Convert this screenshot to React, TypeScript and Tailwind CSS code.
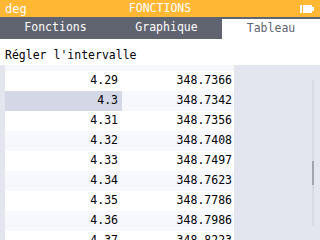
const rows = [
  { x: "4.29", y: "348.7366" },
  { x: "4.3", y: "348.7342", selected: true },
  { x: "4.31", y: "348.7356" },
  { x: "4.32", y: "348.7408" },
  { x: "4.33", y: "348.7497" },
  { x: "4.34", y: "348.7623" },
  { x: "4.35", y: "348.7786" },
  { x: "4.36", y: "348.7986" },
  { x: "4.37", y: "348.8223" },
];

function Battery() {
  return (
    <svg width="14" height="8" viewBox="0 0 14 8">
      <rect x="0" y="0" width="2" height="8" fill="#fff" />
      <rect x="3" y="0" width="9" height="8" fill="#fff" />
      <rect x="12" y="2" width="2" height="4" fill="#fff" />
    </svg>
  );
}

export default function App() {
  return (
    <div className="w-[320px] h-[240px] overflow-hidden flex flex-col bg-white font-['DejaVu_Sans_Mono',monospace] text-[11.5px] relative">
      {/* title bar */}
      <div className="h-[17px] shrink-0 bg-[#ffb734] grid grid-cols-[1fr_auto_1fr] items-center text-white">
        <span className="pl-[5px] text-[12px] leading-none">deg</span>
        <span className="leading-none">FONCTIONS</span>
        <div className="flex justify-end pr-[6px]">
          <Battery />
        </div>
      </div>

      {/* tabs */}
      <div className="h-[22px] shrink-0 bg-[#5f6470] flex">
        <div className="w-[111px] flex items-center justify-center text-white">Fonctions</div>
        <div className="w-[111px] flex items-center justify-center text-white">Graphique</div>
        <div className="flex-1 mt-[2px] bg-white flex items-center justify-center text-[#5f6470]">
          Tableau
        </div>
      </div>

      {/* interval button */}
      <div className="h-[26px] shrink-0 pl-[5px] pt-[8px] leading-[16px] text-black">Régler l'intervalle</div>

      {/* table */}
      <div className="flex-1 min-h-0 overflow-hidden bg-[#e4e6ef] pl-[5px] flex flex-col">
        <div className="w-[229px] h-[6px] bg-[#f6f8fe] shrink-0" />
        {rows.map((r, i) => {
          const light = i % 2 === 1;
          return (
            <div key={r.x} className="flex h-[20px] shrink-0 text-black">
              <div
                className={
                  "w-[117px] flex items-center justify-end pr-[4px] " +
                  (r.selected ? "bg-[#d4d7e6]" : light ? "bg-[#f6f8fe]" : "bg-white")
                }
              >
                {r.x}
              </div>
              <div
                className={
                  "w-[112px] flex items-center justify-end pr-[2px] " +
                  (light ? "bg-[#f6f8fe]" : "bg-white")
                }
              >
                {r.y}
              </div>
            </div>
          );
        })}
      </div>

      {/* scrollbar */}
      <div className="absolute left-[312px] top-[80px] w-[2px] h-[146px] bg-[#d8dae3]">
        <div className="mt-[81px] h-[24px] bg-[#a3a5ad]" />
      </div>
    </div>
  );
}
